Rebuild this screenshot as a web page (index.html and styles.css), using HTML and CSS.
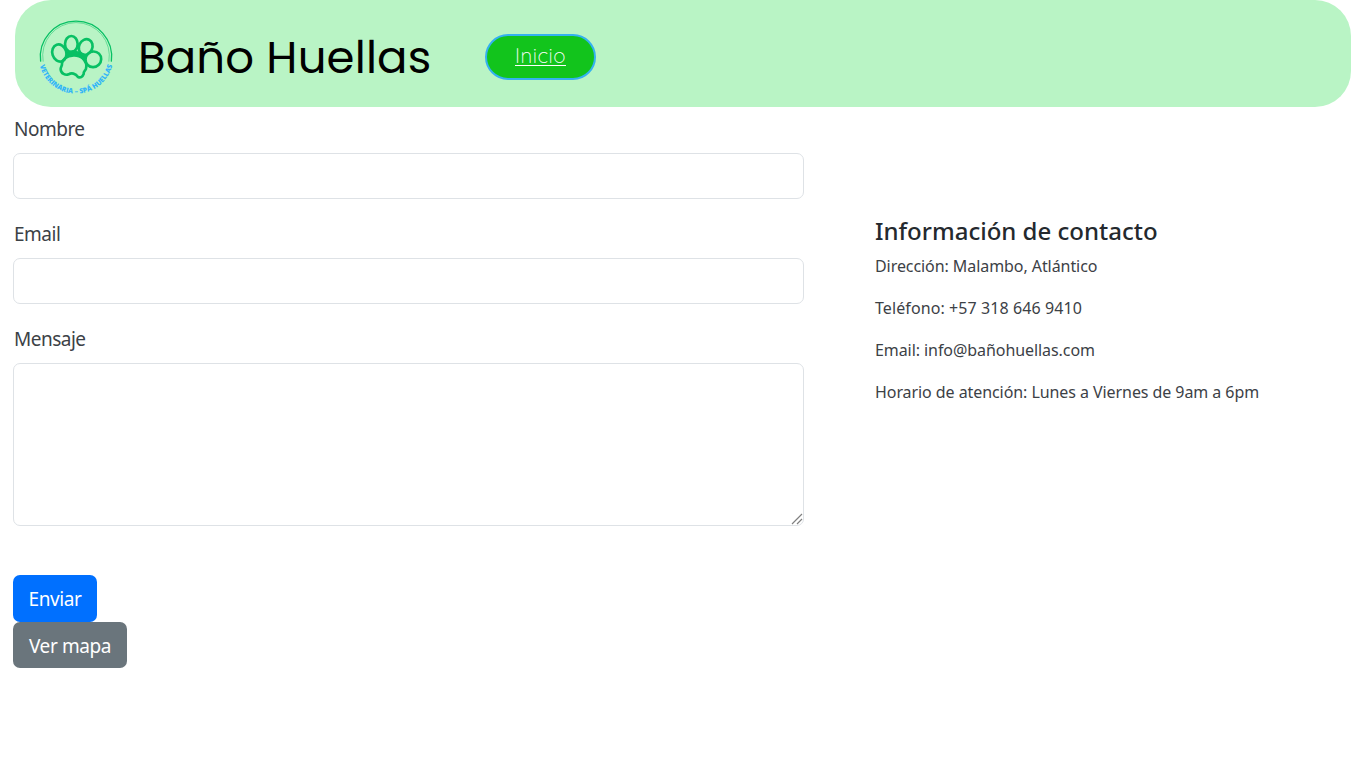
FILE: index.html
```html
<!DOCTYPE html>
<html lang="es">
<head>
<meta charset="utf-8">
<title>Baño Huellas</title>
<link rel="stylesheet" href="styles.css">
</head>
<body>
<header class="header">
  <svg class="logo" viewBox="0 0 300 285" aria-hidden="true">
    <defs><path id="arc" d="M26 139 A112 112 0 0 0 250 139"/></defs>
    <g fill="none" stroke="#08c064">
      <path stroke-width="4" d="M32 155 A107 107 0 1 1 244 155"/>
      <path stroke-width="2" opacity=".7" d="M39.5 155 A100 100 0 1 1 236.5 155"/>
      <path fill="#08c064" stroke="none" d="M106 125 L130 120 L152 126 L172 136 L166 156 L150 142 L130 136 L110 142Z"/>
      <g stroke-width="8" stroke-linejoin="round">
        <ellipse cx="88" cy="129" rx="21" ry="26" transform="rotate(-18 88 129)"/>
        <ellipse cx="124" cy="102" rx="19" ry="24"/>
        <ellipse cx="167" cy="111" rx="20" ry="24" transform="rotate(25 167 111)"/>
        <ellipse cx="190" cy="148" rx="23" ry="24" transform="rotate(45 190 148)"/>
        <path stroke-width="8" d="M105 145 C117 134 145 132 158 145 C169 156 171 166 168 176 C167 181 160 183 161 192 C157 202 151 204 144 201 C137 190 124 188 116 193 C106 197 93 191 92 178 C91 172 97 168 96 160 C97 153 100 149 105 145Z"/>
      </g>
    </g>
    <text class="logo-text"><textPath href="#arc" startOffset="28" textLength="297" lengthAdjust="spacingAndGlyphs">VETERINARIA – SPÁ HUELLAS</textPath></text>
  </svg>
  <h1 class="title">Baño Huellas</h1>
  <a class="nav-link" href="#"><span>Inicio</span></a>
</header>
<main class="main">
  <form class="form">
    <label class="label" for="nombre">Nombre</label>
    <input class="field" id="nombre" type="text">
    <label class="label" for="email">Email</label>
    <input class="field" id="email" type="email">
    <label class="label" for="mensaje">Mensaje</label>
    <div class="area-wrap">
      <textarea class="field area" id="mensaje"></textarea>
      <svg class="grip" viewBox="0 0 12 12" aria-hidden="true"><path d="M1 11L11 1M6 11L11 6" fill="none" stroke="#808080" stroke-width="1.2"/></svg>
    </div>
    <button class="btn primary" type="button">Enviar</button>
    <button class="btn secondary" type="button">Ver mapa</button>
  </form>
  <section class="info">
    <h2 class="info-title">Información de contacto</h2>
    <p class="line">Dirección: Malambo, Atlántico</p>
    <p class="line phone">Teléfono: +57 318 646 9410</p>
    <p class="line">Email: info@bañohuellas.com</p>
    <p class="line">Horario de atención: Lunes a Viernes de 9am a 6pm</p>
  </section>
</main>
</body>
</html>
```
FILE: styles.css
```css
* { box-sizing: border-box; }
body {
  margin: 0;
  height: 768px;
  overflow: hidden;
  background: #fff;
  color: #3c4146;
  font-family: "Segoe UI", "Noto Sans", sans-serif;
}
.header {
  display: flex;
  align-items: flex-start;
  height: 107px;
  margin: 0 15px;
  padding-left: 15px;
  border-radius: 36px;
  background: #b9f4c5;
}
.logo { flex: none; width: 100px; height: 95px; margin-top: 10px; }
.logo-text { font: 800 21px "Open Sans", sans-serif; fill: #32b4f8; }
.title {
  width: 347px;
  margin: 28px 0 0 8px;
  color: #000;
  font: 400 45px/60px Poppins, Inter, sans-serif;
  letter-spacing: 0.15px;
  white-space: nowrap;
}
.nav-link {
  width: 111px;
  height: 46px;
  margin-top: 34px;
  border: 2px solid #34b1f0;
  border-radius: 23px;
  background: #12c41c;
  color: #fff;
  font: 300 20.5px/38px Quicksand, "Open Sans", sans-serif;
  letter-spacing: 0.5px;
  text-align: center;
  text-underline-offset: 2px;
  text-decoration-thickness: 1px;
}
.main { display: flex; align-items: flex-start; padding-left: 13px; }
.form { display: flex; flex-direction: column; align-items: flex-start; width: 791px; padding-top: 8px; }
.label { height: 38px; padding-left: 1px; font-size: 19px; line-height: 28px; letter-spacing: -0.5px; }
.field {
  display: block;
  width: 791px;
  height: 46px;
  margin: 0 0 21px;
  padding: 8px 14px;
  border: 1px solid #dee2e6;
  border-radius: 7px;
  background: #fff;
  font: inherit;
}
.area-wrap { position: relative; margin-bottom: 49px; }
.area { height: 163px; margin: 0; resize: none; }
.grip { position: absolute; right: 1px; bottom: 1px; width: 12px; height: 12px; }
.btn {
  height: 47px;
  padding: 0;
  border: 0;
  border-radius: 7px;
  color: #fff;
  font: 400 19px/48px "Segoe UI", "Noto Sans", sans-serif;
  letter-spacing: -0.4px;
}
.primary { width: 84px; background: #0070ff; }
.secondary { width: 114px; height: 46px; background: #6a757c; }
.info { margin-left: 71px; padding-top: 107px; }
.info-title {
  margin: 0;
  color: #24292e;
  font: 500 24px/34px "Segoe UI", "Noto Sans", sans-serif;
  white-space: nowrap;
}
.line { margin: 6px 0 17px; font-size: 16px; line-height: 25px; letter-spacing: -0.07px; white-space: nowrap; }
.line + .line { margin-top: 0; }
.line.phone { letter-spacing: 0.09px; }
```
